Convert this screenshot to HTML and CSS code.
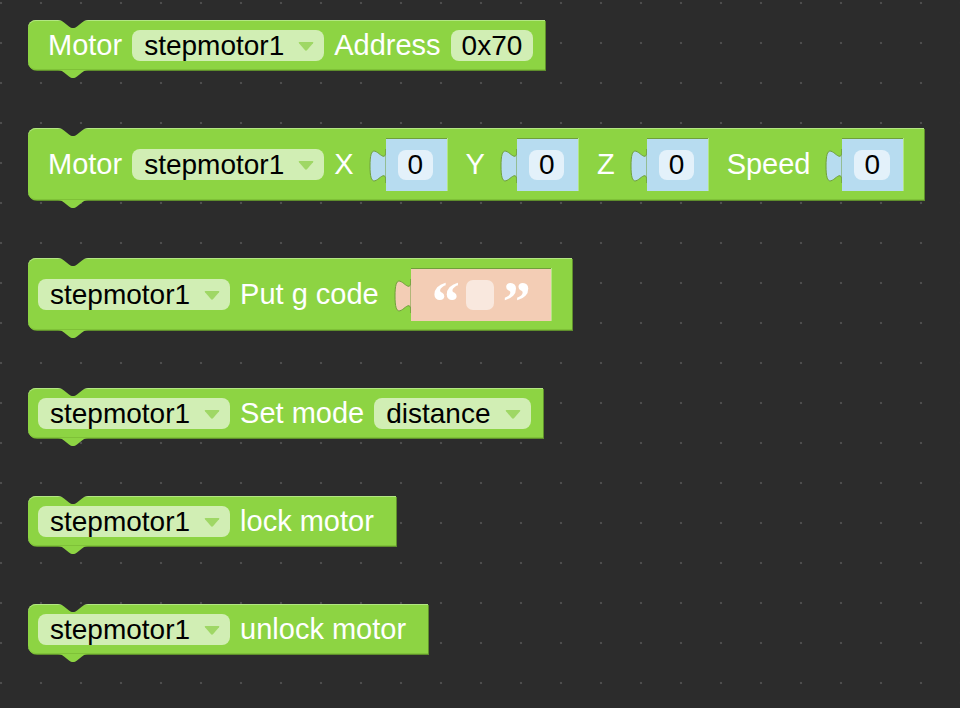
FILE: index.html
```html
<!DOCTYPE html>
<html>
<head>
<meta charset="utf-8">
<link rel="stylesheet" href="styles.css">
</head>
<body>
<div class="ws">
  <div class="blk">
    <span class="lbl">Motor</span>
    <span class="dd">stepmotor1<svg class="arr" viewBox="0 0 18 12"><path d="M2.5 2 H15.5 Q17 2 16 3.3 L10.2 10 Q9 11.3 7.8 10 L2 3.3 Q1 2 2.5 2 Z"/></svg></span>
    <span class="lbl">Address</span>
    <span class="tf">0x70</span>
  </div>

  <div class="blk">
    <span class="lbl">Motor</span>
    <span class="dd">stepmotor1<svg class="arr" viewBox="0 0 18 12"><path d="M2.5 2 H15.5 Q17 2 16 3.3 L10.2 10 Q9 11.3 7.8 10 L2 3.3 Q1 2 2.5 2 Z"/></svg></span>
    <span class="lbl">X</span>
    <span class="sock"><svg class="tab" viewBox="0 0 17 53"><path class="tab-num" d="M17 11 C17 33.7 1 -7 1 28 S17 22.3 17 45 Z"/></svg><span class="num"><span class="nf">0</span></span></span>
    <span class="lbl">Y</span>
    <span class="sock"><svg class="tab" viewBox="0 0 17 53"><path class="tab-num" d="M17 11 C17 33.7 1 -7 1 28 S17 22.3 17 45 Z"/></svg><span class="num"><span class="nf">0</span></span></span>
    <span class="lbl">Z</span>
    <span class="sock"><svg class="tab" viewBox="0 0 17 53"><path class="tab-num" d="M17 11 C17 33.7 1 -7 1 28 S17 22.3 17 45 Z"/></svg><span class="num"><span class="nf">0</span></span></span>
    <span class="lbl">Speed</span>
    <span class="sock"><svg class="tab" viewBox="0 0 17 53"><path class="tab-num" d="M17 11 C17 33.7 1 -7 1 28 S17 22.3 17 45 Z"/></svg><span class="num"><span class="nf">0</span></span></span>
  </div>

  <div class="blk">
    <span class="dd">stepmotor1<svg class="arr" viewBox="0 0 18 12"><path d="M2.5 2 H15.5 Q17 2 16 3.3 L10.2 10 Q9 11.3 7.8 10 L2 3.3 Q1 2 2.5 2 Z"/></svg></span>
    <span class="lbl">Put g code</span>
    <span class="sock"><svg class="tab" viewBox="0 0 17 53"><path class="tab-str" d="M17 11 C17 33.7 1 -7 1 28 S17 22.3 17 45 Z"/></svg><span class="str"><span class="q">&#8220;</span><span class="sf"></span><span class="q">&#8221;</span></span></span>
  </div>

  <div class="blk">
    <span class="dd">stepmotor1<svg class="arr" viewBox="0 0 18 12"><path d="M2.5 2 H15.5 Q17 2 16 3.3 L10.2 10 Q9 11.3 7.8 10 L2 3.3 Q1 2 2.5 2 Z"/></svg></span>
    <span class="lbl">Set mode</span>
    <span class="dd">distance<svg class="arr" viewBox="0 0 18 12"><path d="M2.5 2 H15.5 Q17 2 16 3.3 L10.2 10 Q9 11.3 7.8 10 L2 3.3 Q1 2 2.5 2 Z"/></svg></span>
  </div>

  <div class="blk">
    <span class="dd">stepmotor1<svg class="arr" viewBox="0 0 18 12"><path d="M2.5 2 H15.5 Q17 2 16 3.3 L10.2 10 Q9 11.3 7.8 10 L2 3.3 Q1 2 2.5 2 Z"/></svg></span>
    <span class="lbl">lock motor</span>
  </div>

  <div class="blk">
    <span class="dd">stepmotor1<svg class="arr" viewBox="0 0 18 12"><path d="M2.5 2 H15.5 Q17 2 16 3.3 L10.2 10 Q9 11.3 7.8 10 L2 3.3 Q1 2 2.5 2 Z"/></svg></span>
    <span class="lbl">unlock motor</span>
  </div>
</div>
</body>
</html>
```

FILE: styles.css
```css
html {
  background: #2c2c2c;
}
body {
  margin: 0;
  height: 708px;
  overflow: hidden;
  font-family: "Liberation Sans", Arial, Helvetica, sans-serif;
}
.ws {
  box-sizing: border-box;
  height: 708px;
  padding: 20px 0 0 28px;
  display: flex;
  flex-direction: column;
  align-items: flex-start;
  gap: 58px;
  background-color: #2c2c2c;
  background-image: radial-gradient(circle at 20px 20px, #4e4e4e 0, #4e4e4e 1px, transparent 1.6px);
  background-size: 40px 40px;
  background-position: 21px -17px;
}
.blk {
  position: relative;
  display: flex;
  align-items: center;
  background: #8dd443;
  border-radius: 8px 0 0 8px;
  padding: 10px 12px 9px 10px;
  box-shadow: inset 0 1px 0 #b3e683, inset 0 -1px 0 #7fc138, 1px 1px 0 #5f8f2c;
}
.blk::before {
  content: "";
  position: absolute;
  top: 0;
  left: 30px;
  width: 30px;
  height: 8px;
  background: #2c2c2c;
  clip-path: path("M0 0 C3 0 4 1 6 2.5 L11 6.5 C12.5 7.5 13.5 8 15 8 S17.5 7.5 19 6.5 L24 2.5 C26 1 27 0 30 0 Z");
}
.blk::after {
  content: "";
  position: absolute;
  top: 100%;
  left: 30px;
  width: 30px;
  height: 8px;
  background: #8dd443;
  clip-path: path("M0 0 C3 0 4 1 6 2.5 L11 6.5 C12.5 7.5 13.5 8 15 8 S17.5 7.5 19 6.5 L24 2.5 C26 1 27 0 30 0 Z");
}
.lbl {
  color: #fff;
  font-size: 29px;
  line-height: 31px;
  padding: 0 10px;
  white-space: pre;
}
.dd {
  display: flex;
  align-items: center;
  height: 31px;
  background: #d1eeb4;
  border-radius: 8px;
  padding: 0 9px 0 12px;
  color: #000;
  font-size: 28px;
  line-height: 31px;
  white-space: pre;
}
.arr {
  width: 18px;
  height: 12px;
  margin-left: 13px;
  fill: #9fd765;
}
.tf {
  height: 31px;
  line-height: 31px;
  background: #d1eeb4;
  border-radius: 8px;
  padding: 0 11px;
  color: #000;
  font-size: 28px;
}
.sock {
  display: flex;
  height: 53px;
  margin: 0 9px 0 5px;
}
.tab {
  display: block;
  width: 17px;
  height: 53px;
  overflow: visible;
}
.tab-num {
  fill: #b7dcf0;
  stroke: #6f9f3b;
  stroke-width: 1;
}
.tab-str {
  fill: #f3cdb5;
  stroke: #6f9f3b;
  stroke-width: 1;
}
.num {
  box-sizing: border-box;
  width: 61px;
  display: flex;
  align-items: center;
  padding-left: 12px;
  background: #b7dcf0;
  box-shadow: inset 0 1px 0 #6f9f3b, 1px 0 0 #b3e683;
}
.nf {
  height: 30px;
  line-height: 30px;
  padding: 0 10px;
  background: #e3f1fa;
  border-radius: 8px;
  color: #000;
  font-size: 28px;
}
.str {
  box-sizing: border-box;
  width: 140px;
  display: flex;
  align-items: center;
  padding-left: 21px;
  background: #f3cdb5;
  box-shadow: inset 0 1px 0 #6f9f3b, 1px 0 0 #b3e683;
}
.q {
  color: #fff;
  font-family: "Liberation Serif", "Times New Roman", serif;
  font-weight: bold;
  font-size: 56px;
  line-height: 44px;
  height: 30px;
  width: 24px;
  overflow: visible;
}
.sf {
  width: 28px;
  height: 30px;
  margin: 0 9px 0 10px;
  background: #f9e8de;
  border-radius: 7px;
}
```
